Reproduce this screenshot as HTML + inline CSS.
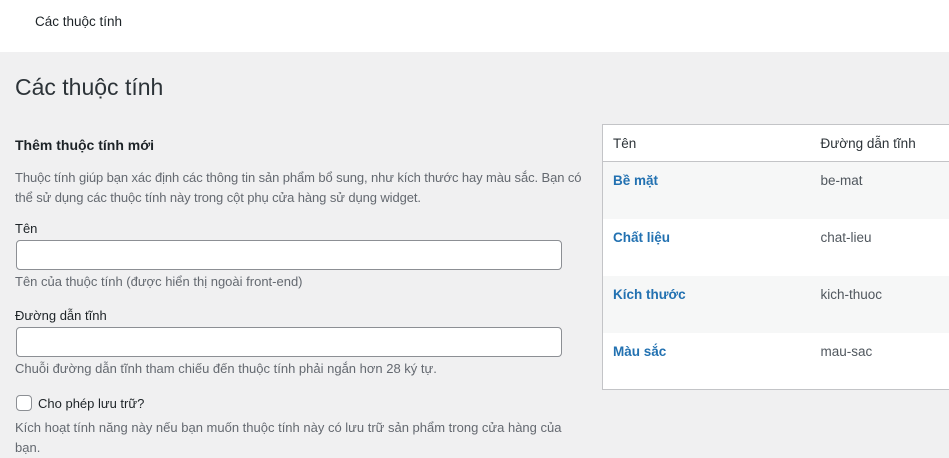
<!DOCTYPE html>
<html><head><meta charset="utf-8"><style>
*{margin:0;padding:0;box-sizing:border-box}
body{width:949px;height:451px;overflow:hidden;background:#f0f0f1;font-family:"Liberation Sans",sans-serif;font-size:13px;color:#3c434a;position:relative}
.top{position:absolute;left:0;top:0;width:949px;height:52px;background:#fff}
.a{position:absolute;white-space:nowrap}
.inp{position:absolute;left:16px;width:546px;height:30px;background:#fff;border:1px solid #8c8f94;border-radius:4px}
table{position:absolute;left:602px;top:124px;width:360px;border:1px solid #c3c4c7;border-collapse:collapse;background:#fff}
th{height:37px;text-align:left;font-weight:normal;color:#2c3338;font-size:13.5px;border-bottom:1px solid #c3c4c7;padding:0 10px}
td{height:57px;vertical-align:top;padding:11px 10px 0;font-size:13.5px}
td.n{color:#2271b1;font-weight:bold;width:208px}
td.s{color:#50575e}
tr.o td{background:#f6f7f7}
</style></head><body>
<div class="top"></div>
<div class="a" style="left:35px;top:14px;font-size:13.5px;color:#1d2327">Các thuộc tính</div>
<div class="a" style="left:15px;top:74px;font-size:23px;color:#2c3338">Các thuộc tính</div>
<div class="a" style="left:15px;top:137px;font-size:14px;font-weight:bold;color:#1d2327">Thêm thuộc tính mới</div>
<div class="a" style="left:15px;top:168px;line-height:20px;color:#646970;letter-spacing:-0.1px">Thuộc tính giúp bạn xác định các thông tin sản phẩm bổ sung, như kích thước hay màu sắc. Bạn có<br>thể sử dụng các thuộc tính này trong cột phụ cửa hàng sử dụng widget.</div>
<div class="a" style="left:15px;top:221px;color:#1d2327">Tên</div>
<div class="inp" style="top:240px"></div>
<div class="a" style="left:15px;top:274px;color:#646970">Tên của thuộc tính (được hiển thị ngoài front-end)</div>
<div class="a" style="left:15px;top:308px;color:#1d2327">Đường dẫn tĩnh</div>
<div class="inp" style="top:327px"></div>
<div class="a" style="left:15px;top:361px;color:#646970">Chuỗi đường dẫn tĩnh tham chiếu đến thuộc tính phải ngắn hơn 28 ký tự.</div>
<div class="a" style="left:16px;top:395px;width:16px;height:16px;background:#fff;border:1px solid #8c8f94;border-radius:4px"></div>
<div class="a" style="left:38px;top:396px;color:#1d2327">Cho phép lưu trữ?</div>
<div class="a" style="left:15px;top:418px;line-height:20px;color:#646970">Kích hoạt tính năng này nếu bạn muốn thuộc tính này có lưu trữ sản phẩm trong cửa hàng của<br>bạn.</div>
<table>
<tr><th>Tên</th><th>Đường dẫn tĩnh</th></tr>
<tr class="o"><td class="n">Bề mặt</td><td class="s">be-mat</td></tr>
<tr><td class="n">Chất liệu</td><td class="s">chat-lieu</td></tr>
<tr class="o"><td class="n">Kích thước</td><td class="s">kich-thuoc</td></tr>
<tr><td class="n">Màu sắc</td><td class="s">mau-sac</td></tr>
</table>
</body></html>
